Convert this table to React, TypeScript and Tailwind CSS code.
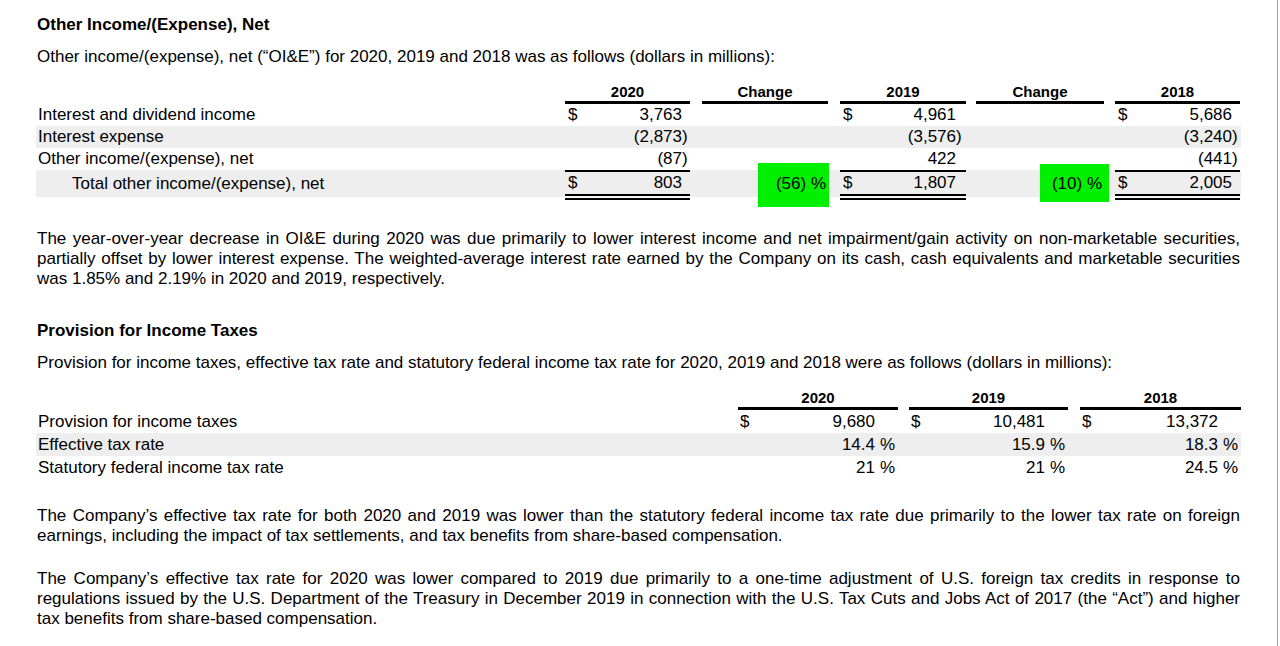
import React from 'react';

const GRAY = 'bg-[#eeeeee]';
const T1_COLS = 'grid grid-cols-[529px_125px_12px_126px_12px_126px_10px_128px_11px_125px]';
const T2_COLS = 'grid grid-cols-[702px_160px_11px_159px_12px_161px]';

interface Amount {
  value: string;
  neg?: boolean;
  dollar?: boolean;
}

// Parenthesis hangs to the right so digits line up.
const Value: React.FC<{ a: Amount }> = ({ a }) =>
  a.neg ? (
    <span className="relative">
      ({a.value}
      <span className="absolute left-full">)</span>
    </span>
  ) : (
    <span>{a.value}</span>
  );

const AmountCell: React.FC<{ a: Amount; pr?: string; total?: boolean }> = ({
  a,
  pr = 'pr-[8px]',
  total = false,
}) => (
  <div
    className={`flex items-center justify-between pl-[3px] ${pr} ${
      total ? 'h-[30px] border-t-2 border-b-[6px] border-double border-black' : ''
    }`}
    style={total ? { borderTopStyle: 'solid' } : undefined}
  >
    <span>{a.dollar ? '$' : ''}</span>
    <Value a={a} />
  </div>
);

const HeaderCell: React.FC<{ label: string }> = ({ label }) => (
  <div className="h-[21px] border-b-[3px] border-black text-center text-[15px] font-bold leading-[18px]">
    {label}
  </div>
);

const oieRows: { label: string; cols: [Amount, Amount, Amount]; gray?: boolean }[] = [
  {
    label: 'Interest and dividend income',
    cols: [
      { value: '3,763', dollar: true },
      { value: '4,961', dollar: true },
      { value: '5,686', dollar: true },
    ],
  },
  {
    label: 'Interest expense',
    gray: true,
    cols: [
      { value: '2,873', neg: true },
      { value: '3,576', neg: true },
      { value: '3,240', neg: true },
    ],
  },
  {
    label: 'Other income/(expense), net',
    cols: [{ value: '87', neg: true }, { value: '422' }, { value: '441', neg: true }],
  },
];

const taxRows: { label: string; cols: [string, string, string]; pct?: boolean; dollar?: boolean; gray?: boolean }[] = [
  { label: 'Provision for income taxes', cols: ['9,680', '10,481', '13,372'], dollar: true },
  { label: 'Effective tax rate', cols: ['14.4', '15.9', '18.3'], pct: true, gray: true },
  { label: 'Statutory federal income tax rate', cols: ['21', '21', '24.5'], pct: true },
];

export default function App() {
  return (
    <div className="min-h-[646px] w-[1278px] border-r border-[#a6a6a6] bg-white font-['Liberation_Sans',Arial,sans-serif] text-[17px] leading-[20px] text-black">
      <div className="ml-[36px] w-[1205px] pt-[15px]">
        <h2 className="pl-[1px] font-bold">Other Income/(Expense), Net</h2>
        <p className="mt-[12px] pl-[1px]">
          Other income/(expense), net (“OI&amp;E”) for 2020, 2019 and 2018 was as follows (dollars in millions):
        </p>

        {/* OI&E table */}
        <div className="mt-[16px]">
          <div className={T1_COLS}>
            <div />
            <HeaderCell label="2020" />
            <div />
            <HeaderCell label="Change" />
            <div />
            <HeaderCell label="2019" />
            <div />
            <HeaderCell label="Change" />
            <div />
            <HeaderCell label="2018" />
          </div>
          {oieRows.map((row) => (
            <div key={row.label} className={`${T1_COLS} h-[22px] items-center ${row.gray ? GRAY : ''}`}>
              <div className="pl-[2px]">{row.label}</div>
              <AmountCell a={row.cols[0]} />
              <div />
              <div />
              <div />
              <AmountCell a={row.cols[1]} pr="pr-[10px]" />
              <div />
              <div />
              <div />
              <AmountCell a={row.cols[2]} />
            </div>
          ))}
          <div className={`${T1_COLS} h-[27px] grid-rows-[27px] items-start ${GRAY}`}>
            <div className="flex h-[27px] items-center pl-[36px]">Total other income/(expense), net</div>
            <AmountCell a={{ value: '803', dollar: true }} total />
            <div />
            <div className="relative flex h-[27px] items-center justify-end pr-[2px]">
              <div className="absolute -top-[7px] -right-[1px] -bottom-[10px] left-[56px] bg-[#00f000]" />
              <span className="relative">(56) %</span>
            </div>
            <div />
            <AmountCell a={{ value: '1,807', dollar: true }} pr="pr-[10px]" total />
            <div />
            <div className="relative flex h-[27px] items-center justify-end pr-[2px]">
              <div className="absolute -top-[6px] -right-[5px] -bottom-[5px] left-[64px] bg-[#00f000]" />
              <span className="relative">(10) %</span>
            </div>
            <div />
            <AmountCell a={{ value: '2,005', dollar: true }} total />
          </div>
        </div>

        <p className="mt-[32px] px-[1px] text-justify">
          The year-over-year decrease in OI&amp;E during 2020 was due primarily to lower interest income and net
          impairment/gain activity on non-marketable securities, partially offset by lower interest expense. The
          weighted-average interest rate earned by the Company on its cash, cash equivalents and marketable securities
          was 1.85% and 2.19% in 2020 and 2019, respectively.
        </p>

        <h2 className="mt-[32px] pl-[1px] font-bold">Provision for Income Taxes</h2>
        <p className="mt-[12px] pl-[1px]">
          Provision for income taxes, effective tax rate and statutory federal income tax rate for 2020, 2019 and 2018
          were as follows (dollars in millions):
        </p>

        {/* Tax table */}
        <div className="mt-[16px]">
          <div className={T2_COLS}>
            <div />
            <HeaderCell label="2020" />
            <div />
            <HeaderCell label="2019" />
            <div />
            <HeaderCell label="2018" />
          </div>
          {taxRows.map((row) => (
            <div key={row.label} className={`${T2_COLS} h-[23px] items-center ${row.gray ? GRAY : ''}`}>
              <div className="pl-[2px]">{row.label}</div>
              {row.cols.map((v, i) => (
                <React.Fragment key={i}>
                  {i > 0 && <div />}
                  <div className="flex items-center justify-between pl-[2px] pr-[3px]">
                    <span>{row.dollar ? '$' : ''}</span>
                    <span className="flex">
                      {v}
                      <span className="inline-block w-[20px] text-right">{row.pct ? '%' : ''}</span>
                    </span>
                  </div>
                </React.Fragment>
              ))}
            </div>
          ))}
        </div>

        <p className="mt-[27px] px-[1px] text-justify">
          The Company’s effective tax rate for both 2020 and 2019 was lower than the statutory federal income tax rate
          due primarily to the lower tax rate on foreign earnings, including the impact of tax settlements, and tax
          benefits from share-based compensation.
        </p>
        <p className="mt-[23px] px-[1px] text-justify">
          The Company’s effective tax rate for 2020 was lower compared to 2019 due primarily to a one-time adjustment
          of U.S. foreign tax credits in response to regulations issued by the U.S. Department of the Treasury in
          December 2019 in connection with the U.S. Tax Cuts and Jobs Act of 2017 (the “Act”) and higher tax benefits
          from share-based compensation.
        </p>
      </div>
    </div>
  );
}
